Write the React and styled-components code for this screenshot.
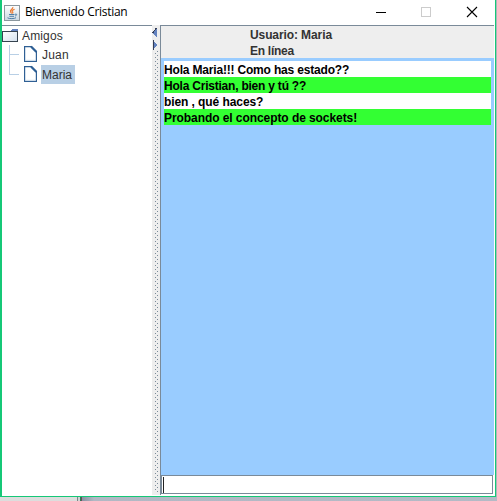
import React from 'react';
import styled, { createGlobalStyle } from 'styled-components';

const Global = createGlobalStyle`
  * { box-sizing: border-box; }
  body { margin: 0; overflow: hidden; background: #b4bac6; }
  svg { display: block; flex: none; }
`;

const Desktop = styled.div`
  width: 497px;
  height: 501px;
  display: flex;
  flex-direction: column;
  background: linear-gradient(90deg, #b4bac6 494px, #a9b5b5 497px);
  font-family: 'Liberation Sans', Arial, sans-serif;
  font-size: 12px;
  color: #333;
`;

const Window = styled.div`
  width: 496px;
  height: 497px;
  display: flex;
  flex-direction: column;
  background: #fff;
  border: solid #15c877;
  border-width: 0 1px 1px 2px;
`;

const TitleBar = styled.div`
  height: 25px;
  flex: none;
  display: flex;
  align-items: center;
  padding: 0 1px 0 2px;
`;

const Title = styled.div`
  margin-left: 5px;
  flex: 1;
  font: 12px/22px 'Open Sans', 'Noto Sans', sans-serif;
  padding-bottom: 2px;
  letter-spacing: ${(p) => p.$spacing};
  color: #000;
  white-space: nowrap;
`;

const Body = styled.div`
  height: 470px;
  width: 492px;
  display: flex;
`;

const Friends = styled.div`
  width: 150px;
  border-top: 1px solid #7a8a99;
  background: #fff;
`;

const TreeRow = styled.div`
  height: ${(p) => p.$height || 20}px;
  display: flex;
  align-items: flex-start;
`;

const TreeLabel = styled.span`
  height: 19px;
  line-height: 20px;
  padding: 0 3px 0 1px;
  margin-left: ${(p) => p.$gap}px;
  letter-spacing: ${(p) => p.$spacing || '0'};
  background: ${(p) => (p.$selected ? '#b8cfe5' : 'transparent')};
  white-space: nowrap;
`;

const Splitter = styled.div`
  width: 8px;
  background: #eee;
`;

const Chat = styled.div`
  width: 334px;
  display: flex;
  flex-direction: column;
  border: solid #7a8a99;
  border-width: 1px 0 0 1px;
`;

const ChatHeader = styled.div`
  height: 32px;
  background: #eee;
  padding: 1px 0 0 89px;
  font-weight: bold;
  line-height: 16px;
`;

const Line = styled.div`
  white-space: nowrap;
  letter-spacing: ${(p) => p.$spacing || '0'};
`;

const Messages = styled.div`
  height: 417px;
  background: #99ccff;
  padding: 3px 3px 0;
`;

const Message = styled(Line)`
  height: 16px;
  line-height: 18px;
  font-weight: bold;
  color: #000;
  background: ${(p) => (p.$own ? '#33ff33' : '#fff')};
`;

const Input = styled.div`
  height: 19px;
  width: 332px;
  border: 1px solid #7a8a99;
  padding: 1px 0 0 1px;
`;

const Caret = styled.div`
  width: 1px;
  height: 16px;
  background: #222;
`;

const Taskbar = styled.div`
  height: 4px;
  display: flex;
  background: linear-gradient(90deg, #858c9d 80px, #b2b8c4 94px, #b4bac6 490px);
`;

const Backdrop = styled.div`
  width: 82px;
  background: linear-gradient(90deg, #ddd 0 77px, #7d8588 77px 78px, #d0d4d4 78px 80px, #278654 80px 81px, #6d4c5e 81px 82px);
`;

const JavaIcon = () => (
  <svg width="16" height="16" viewBox="0 0 16 16" fill="none">
    <defs>
      <linearGradient id="tile" x1="0" y1="0" x2="0" y2="1">
        <stop offset="0" stopColor="#fff" />
        <stop offset="1" stopColor="#cbd7e1" />
      </linearGradient>
    </defs>
    <rect x=".5" y=".5" width="15" height="15" fill="url(#tile)" stroke="#8b979e" />
    <path d="M8.8 2C9.5 4 5.3 4.7 6.6 7L7.7 8.5M10.6 4.2C8 5.2 7.2 6 8.8 7.2L8.5 8.5" stroke="#ed7b32" strokeWidth="1.2" />
    <path d="M5 9.5H10.5M5.4 11.3H10M3.5 12.8C5 14 10.8 13.8 12 12.7M11 9.3C13.4 8.5 13.2 10.4 11.1 11" stroke="#4f7fa7" />
  </svg>
);

const FolderIcon = () => (
  <svg width="17" height="19" viewBox="0 0 17 19" shapeRendering="crispEdges">
    <defs>
      <linearGradient id="folder" x1="0" y1="0" x2="1" y2="1">
        <stop offset="0" stopColor="#fff" />
        <stop offset="1" stopColor="#d3e0ec" />
      </linearGradient>
    </defs>
    <path d="M.5 5.5H15.5V15.5H.5Z" fill="url(#folder)" stroke="#36434f" />
    <path d="M10 3H16V5H9V4H10Z" fill="#6382bf" />
    <path d="M9 5.5H15" stroke="#36434f" />
  </svg>
);

const LeafLead = ({ last }) => (
  <svg width="36" height="20" viewBox="0 0 36 20" fill="none">
    <path d={last ? 'M7.5 0V9.5H17' : 'M7.5 0V20M7.5 9.5H17'} stroke="#b8cfe5" shapeRendering="crispEdges" />
    <path d="M22.6 1.6H29.5L34.4 6.5V16.4H22.6Z" fill="#fff" stroke="#2f5f94" strokeWidth="1.2" />
    <path d="M29 1.5L34.5 7" stroke="#2f5f94" strokeWidth="2" />
    <path d="M29 3L33 7" stroke="#83a3c4" strokeWidth="1" />
    <path d="M23.5 15.3H33.5" stroke="#d3e0ec" />
  </svg>
);

const SplitterArt = () => (
  <svg width="8" height="470" viewBox="0 0 8 470" shapeRendering="crispEdges">
    <defs>
      <pattern id="grip" width="4" height="4" patternUnits="userSpaceOnUse">
        <path d="M3 0h1v1h-1zM1 2h1v1h-1z" fill="#7a8a99" />
      </pattern>
    </defs>
    <rect x="2" y="26" width="5" height="441" fill="url(#grip)" />
    <path d="M5 3V13L1 8Z" fill="#6382bf" />
    <path d="M4.5 3L.5 8" stroke="#333c55" fill="none" />
    <path d="M1 15V25L5 20Z" fill="#6382bf" />
    <path d="M1.5 15V25" stroke="#333c55" />
  </svg>
);

const Controls = () => (
  <svg width="120" height="25" viewBox="0 0 120 25" fill="none">
    <path d="M2 12.5H12" stroke="#000" shapeRendering="crispEdges" />
    <rect x="47.5" y="7.5" width="9" height="9" stroke="#ccc" shapeRendering="crispEdges" />
    <path d="M93 7L103 17M103 7L93 17" stroke="#000" strokeWidth="1.1" />
  </svg>
);

export default function App() {
  return (
    <>
      <Global />
      <Desktop>
        <Window>
          <TitleBar>
            <JavaIcon />
            <Title $spacing="-0.31px">Bienvenido Cristian</Title>
            <Controls />
          </TitleBar>
          <Body>
            <Friends>
              <TreeRow $height={19}>
                <FolderIcon />
                <TreeLabel $gap={2} $spacing="0.15px">Amigos</TreeLabel>
              </TreeRow>
              <TreeRow>
                <LeafLead />
                <TreeLabel $gap={3} $spacing="0.2px">Juan</TreeLabel>
              </TreeRow>
              <TreeRow>
                <LeafLead last />
                <TreeLabel $gap={3} $selected>Maria</TreeLabel>
              </TreeRow>
            </Friends>
            <Splitter><SplitterArt /></Splitter>
            <Chat>
              <ChatHeader>
                <Line $spacing="-0.1px">Usuario: Maria</Line>
                <Line $spacing="-0.28px">En línea</Line>
              </ChatHeader>
              <Messages>
                <Message $spacing="-0.18px">Hola Maria!!! Como has estado??</Message>
                <Message $own $spacing="-0.22px">Hola Cristian, bien y tú ??</Message>
                <Message $spacing="-0.08px">bien , qué haces?</Message>
                <Message $own $spacing="-0.07px">Probando el concepto de sockets!</Message>
              </Messages>
              <Input><Caret /></Input>
            </Chat>
          </Body>
        </Window>
        <Taskbar><Backdrop /></Taskbar>
      </Desktop>
    </>
  );
}
